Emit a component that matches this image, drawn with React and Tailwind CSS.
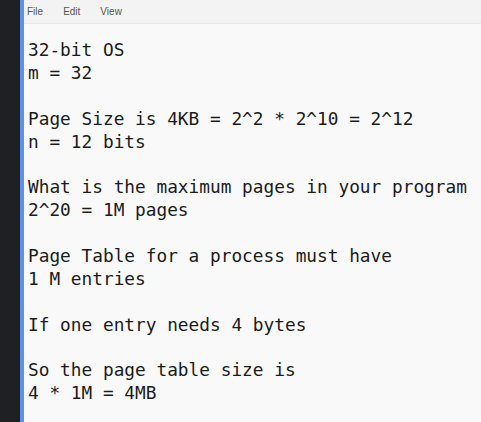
import React from 'react';

const lines = [
  '32-bit OS',
  'm = 32',
  '',
  'Page Size is 4KB = 2^2 * 2^10 = 2^12',
  'n = 12 bits',
  '',
  'What is the maximum pages in your program',
  '2^20 = 1M pages',
  '',
  'Page Table for a process must have',
  '1 M entries',
  '',
  'If one entry needs 4 bytes',
  '',
  'So the page table size is',
  '4 * 1M = 4MB',
];

const App = () => {
  return (
    <div className="flex h-[422px] w-[481px] overflow-hidden bg-[#1f2023]">
      <div className="w-[20px] shrink-0" />
      <div className="w-[4px] shrink-0 bg-[#5d8ff0]" />
      <div className="flex flex-1 flex-col bg-[#f9f9f9]">
        {/* Menu bar */}
        <div className="flex h-[24px] items-center gap-[20px] border-b border-[#e6e6e6] bg-[#f3f3f3] pl-[3px] font-['Liberation_Sans',sans-serif] text-[10px] text-[#555]">
          <span>File</span>
          <span>Edit</span>
          <span>View</span>
        </div>

        {/* Editor text */}
        <div className="whitespace-pre pl-[4px] pt-[15px] font-['DejaVu_Sans_Mono',monospace] text-[17.8px] leading-[22.9px] text-[#1b1b1b]">
          {lines.map((line, i) => (
            <div key={i} className="h-[22.9px]">{line}</div>
          ))}
        </div>
      </div>
    </div>
  );
};

export default App;
